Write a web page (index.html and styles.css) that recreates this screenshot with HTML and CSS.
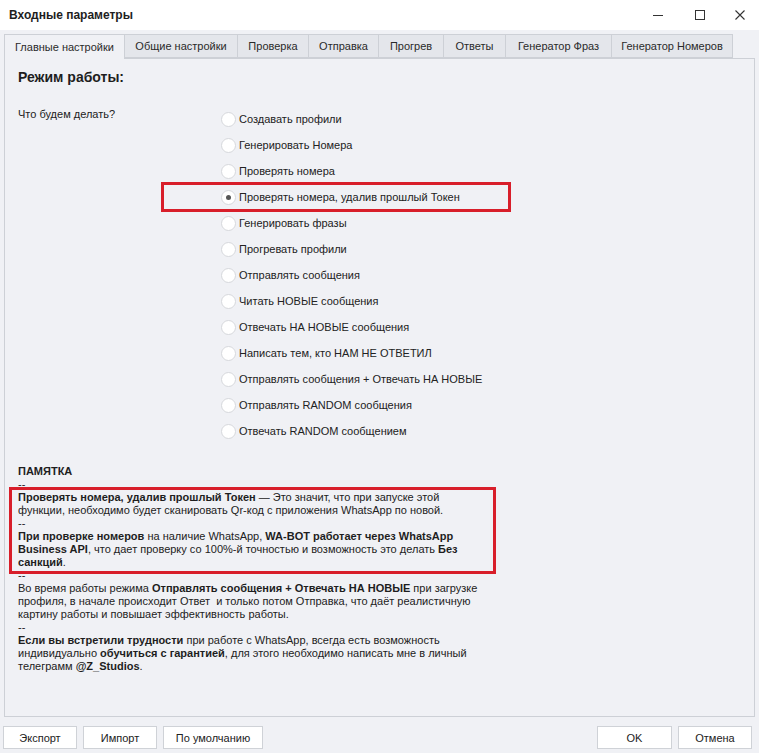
FILE: index.html
```html
<!DOCTYPE html>
<html lang="ru">
<head>
<meta charset="utf-8">
<title>Входные параметры</title>
<link rel="stylesheet" href="styles.css">
</head>
<body>
<div class="window">
  <div class="titlebar">
    <div class="title">Входные параметры</div>
    <div class="controls">
      <span class="ctl"><svg width="12" height="12" viewBox="0 0 12 12"><path d="M1 6.5H11" stroke="#333" stroke-width="1"/></svg></span>
      <span class="ctl"><svg width="12" height="12" viewBox="0 0 12 12"><rect x="1.5" y="1.5" width="9" height="9" fill="none" stroke="#333" stroke-width="1"/></svg></span>
      <span class="ctl last"><svg width="12" height="12" viewBox="0 0 12 12"><path d="M1.5 1.5L10.5 10.5M10.5 1.5L1.5 10.5" stroke="#333" stroke-width="1.1"/></svg></span>
    </div>
  </div>
  <div class="main">
    <div class="tabs">
      <div class="tab active t1">Главные настройки</div>
      <div class="tab t2">Общие настройки</div>
      <div class="tab t3">Проверка</div>
      <div class="tab t4">Отправка</div>
      <div class="tab t5">Прогрев</div>
      <div class="tab t6">Ответы</div>
      <div class="tab t7">Генератор Фраз</div>
      <div class="tab t8">Генератор Номеров</div>
    </div>
    <div class="panel">
      <div class="heading">Режим работы:</div>
      <div class="mode">
        <div class="question">Что будем делать?</div>
        <div class="radios">
          <div class="radio"><span class="dot"></span>Создавать профили</div>
          <div class="radio"><span class="dot"></span>Генерировать Номера</div>
          <div class="radio"><span class="dot"></span>Проверять номера</div>
          <div class="radio marked"><span class="dot checked"></span>Проверять номера, удалив прошлый Токен</div>
          <div class="radio"><span class="dot"></span>Генерировать фразы</div>
          <div class="radio"><span class="dot"></span>Прогревать профили</div>
          <div class="radio"><span class="dot"></span>Отправлять сообщения</div>
          <div class="radio"><span class="dot"></span>Читать НОВЫЕ сообщения</div>
          <div class="radio"><span class="dot"></span>Отвечать НА НОВЫЕ сообщения</div>
          <div class="radio"><span class="dot"></span>Написать тем, кто НАМ НЕ ОТВЕТИЛ</div>
          <div class="radio"><span class="dot"></span>Отправлять сообщения + Отвечать НА НОВЫЕ</div>
          <div class="radio"><span class="dot"></span>Отправлять RANDOM сообщения</div>
          <div class="radio"><span class="dot"></span>Отвечать RANDOM сообщением</div>
        </div>
      </div>
      <div class="memo">
        <div><b>ПАМЯТКА</b></div>
        <div>--</div>
        <div class="hl">
          <div><b>Проверять номера, удалив прошлый Токен</b> — Это значит, что при запуске этой</div>
          <div>функции, необходимо будет сканировать Qr-код с приложения WhatsApp по новой.</div>
          <div>--</div>
          <div><b>При проверке номеров</b> на наличие WhatsApp, <b>WA-BOT работает через WhatsApp</b></div>
          <div><b>Business API</b>, что дает проверку со 100%-й точностью и возможность это делать <b>Без</b></div>
          <div><b>санкций</b>.</div>
        </div>
        <div>--</div>
        <div>Во время работы режима <b>Отправлять сообщения + Отвечать НА НОВЫЕ</b> при загрузке</div>
        <div>профиля, в начале происходит Ответ&nbsp; и только потом Отправка, что даёт реалистичную</div>
        <div>картину работы и повышает эффективность работы.</div>
        <div>--</div>
        <div><b>Если вы встретили трудности</b> при работе с WhatsApp, всегда есть возможность</div>
        <div>индивидуально <b>обучиться с гарантией</b>, для этого необходимо написать мне в личный</div>
        <div>телеграмм <b>@Z_Studios</b>.</div>
      </div>
    </div>
    <div class="footer">
      <div class="group">
        <button class="btn w74">Экспорт</button>
        <button class="btn w74">Импорт</button>
        <button class="btn w100">По умолчанию</button>
      </div>
      <div class="group">
        <button class="btn w75">OK</button>
        <button class="btn w74">Отмена</button>
      </div>
    </div>
  </div>
</div>
</body>
</html>
```

FILE: styles.css
```css
*, *::before, *::after { box-sizing: border-box; }
html, body { margin: 0; padding: 0; }
body {
  width: 759px;
  height: 753px;
  overflow: hidden;
  background: #f0f1f5;
  font-family: "Liberation Sans", Arial, sans-serif;
  font-size: 11px;
  color: #222;
}
.window { display: flex; flex-direction: column; height: 753px; }
.titlebar {
  height: 30px;
  background: #fff;
  display: flex;
  align-items: center;
  justify-content: space-between;
  padding-left: 9px;
}
.title { font-weight: bold; font-size: 12px; color: #1e1e1e; }
.controls { display: flex; height: 30px; }
.ctl {
  width: 42px;
  display: flex;
  align-items: center;
  justify-content: center;
}
.ctl.last { width: 38px; }
.ctl svg { display: block; }
.main {
  flex: 1;
  display: flex;
  flex-direction: column;
  padding: 4px 4px 0 4px;
}
.tabs { display: flex; height: 24px; align-items: flex-end; position: relative; z-index: 1; }
.tab {
  height: 24px;
  display: flex;
  align-items: center;
  justify-content: center;
  background: #e4e6eb;
  border: 1px solid #cdd0d6;
  border-left: none;
  color: #2a2a2a;
  white-space: nowrap;
}
.t1 { width: 121px; }
.t2 { width: 113px; }
.t3 { width: 71px; }
.t4 { width: 70px; }
.t5 { width: 65px; }
.t6 { width: 62px; }
.t7 { width: 106px; }
.t8 { width: 121px; }
.tab.active {
  height: 25px;
  margin-bottom: -1px;
  background: #f0f1f5;
  border-left: 1px solid #cdd0d6;
  border-bottom: none;
}
.panel {
  flex: 1;
  border: 1px solid #cdd0d6;
  padding: 0 13px;
  background: #f0f1f5;
}
.heading {
  font-weight: bold;
  font-size: 14px;
  line-height: 18px;
  margin-top: 9px;
  color: #1e1e1e;
}
.mode { display: flex; margin-top: 21px; }
.question { width: 203px; flex: none; line-height: 14px; }
.radios { margin-top: -1px; }
.radio {
  height: 26px;
  display: flex;
  align-items: center;
  white-space: nowrap;
  position: relative;
}
.dot {
  width: 15px;
  height: 15px;
  flex: none;
  border-radius: 50%;
  background: #fff;
  border: 1px solid #d6d8dc;
  margin-right: 3px;
  display: flex;
  align-items: center;
  justify-content: center;
}
.dot.checked::after {
  content: "";
  width: 5px;
  height: 5px;
  border-radius: 50%;
  background: #555;
}
.marked::before {
  content: "";
  position: absolute;
  left: -60px;
  top: -2px;
  width: 350px;
  height: 30px;
  border: 3px solid #d81e2a;
}
.memo {
  margin-top: 21px;
  line-height: 13px;
  white-space: nowrap;
  color: #222;
}
.memo b { color: #1e1e1e; }
.hl { position: relative; }
.hl::after {
  content: "";
  position: absolute;
  left: -9px;
  top: -4px;
  bottom: -5px;
  width: 487px;
  border: 3px solid #d81e2a;
}
.footer {
  height: 36px;
  display: flex;
  justify-content: space-between;
  align-items: flex-start;
  padding-top: 9px;
  margin: 0 3px 0 -1px;
}
.group { display: flex; gap: 6px; }
.btn {
  height: 23px;
  background: #fff;
  border: 1px solid #cfd2d7;
  font-family: "Liberation Sans", Arial, sans-serif;
  font-size: 11px;
  color: #222;
  padding: 0;
}
.w74 { width: 74px; }
.w75 { width: 75px; }
.w100 { width: 100px; }
```
